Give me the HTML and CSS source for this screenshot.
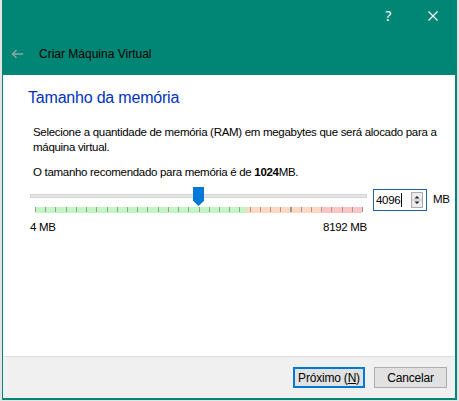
FILE: index.html
```html
<!DOCTYPE html>
<html lang="pt">
<head>
<meta charset="utf-8">
<link rel="stylesheet" href="styles.css">
</head>
<body>
<div class="window">
  <header class="header">
    <div class="titlebar">
      <span class="help">?</span>
      <svg class="close" width="10" height="10" viewBox="0 0 10 10"><path d="M0.5 0.5L9.5 9.5M9.5 0.5L0.5 9.5" stroke="#fff" stroke-width="1.2"/></svg>
    </div>
    <div class="navrow">
      <svg class="back" width="12" height="10" viewBox="0 0 12 10"><path d="M12 5H1.5M5.5 1L1.5 5L5.5 9" stroke="#8fa9a4" stroke-width="1.3" fill="none"/></svg>
      <span class="navtitle">Criar Máquina Virtual</span>
    </div>
  </header>
  <main class="content">
    <h1 class="heading">Tamanho da memória</h1>
    <div class="body">
      <p class="desc">Selecione a quantidade de memória (RAM) em megabytes que será alocado para a máquina virtual.</p>
      <p class="rec">O tamanho recomendado para memória é de <b>1024</b>MB.</p>
    </div>
    <div class="sliderrow">
      <div class="slidercol">
        <div class="track">
          <div class="thumb"></div>
        </div>
        <div class="scale">
          <div class="zone green"></div>
          <div class="zone orange"></div>
          <div class="zone red"></div>
          <div class="ticks"></div>
        </div>
        <div class="limits"><span>4 MB</span><span>8192 MB</span></div>
      </div>
      <div class="spin">
        <span class="spinval">4096<span class="caret"></span></span>
        <span class="spinbtns">
          <svg width="12" height="16" viewBox="0 0 12 16"><rect x="0.5" y="0.5" width="11" height="15" fill="#ececec" stroke="#adadad"/><path d="M3.5 6.5L6 4L8.5 6.5Z" fill="#222"/><path d="M3.5 9.5L6 12L8.5 9.5Z" fill="#222"/><path d="M1 8H11" stroke="#c8c8c8"/></svg>
        </span>
      </div>
      <span class="unit">MB</span>
    </div>
  </main>
  <footer class="footer">
    <button class="btn primary">Próximo (<u>N</u>)</button>
    <button class="btn">Cancelar</button>
  </footer>
</div>
</body>
</html>
```
FILE: styles.css
```css
* { box-sizing: border-box; }
html, body { margin: 0; padding: 0; }
body {
  background: #e4e4e4;
  width: 459px;
  height: 401px;
  overflow: hidden;
  font-family: "Liberation Sans", Arial, sans-serif;
  font-size: 11.5px;
  letter-spacing: -0.3px;
  color: #000;
}
.window {
  margin-left: 2px;
  width: 455px;
  height: 400px;
  border: 1px solid #018574;
  border-right-width: 2px;
  border-top: 0;
  border-bottom-width: 2px;
  display: flex;
  flex-direction: column;
  background: #fff;
}
.header {
  background: #018574;
  height: 75px;
  display: flex;
  flex-direction: column;
}
.titlebar {
  height: 31px;
  display: flex;
  align-items: center;
  justify-content: flex-end;
  padding-right: 17px;
  gap: 37px;
  color: #fff;
}
.help { font-size: 14px; line-height: 14px; font-family: "Noto Sans", sans-serif; }
.navrow {
  display: flex;
  align-items: center;
  height: 44px;
  padding-left: 8px;
  padding-top: 2px;
}
.back { margin-right: 16px; }
.navtitle { font-size: 12px; letter-spacing: 0; color: #000; }
.content {
  flex: 1;
  padding: 13px 0 0 25px;
}
.heading {
  margin: 0;
  font-weight: normal;
  font-size: 16px;
  letter-spacing: -0.2px;
  line-height: 20px;
  color: #0033bb;
}
.body { padding-left: 5px; padding-top: 17px; }
.desc { margin: 0; line-height: 15px; width: 410px; }
.rec { margin: 10px 0 0; line-height: 15px; }
.rec b { font-weight: bold; }
.sliderrow {
  display: flex;
  align-items: flex-start;
  margin-top: 7px;
  padding-left: 2px;
}
.slidercol { width: 337px; }
.track {
  position: relative;
  margin-top: 7px;
  height: 4px;
  background: #e6e6e6;
  border: 1px solid #d4d4d4;
}
.thumb {
  position: absolute;
  left: 162px;
  top: -8px;
  width: 11px;
  height: 19px;
  background: #0078d7;
  clip-path: polygon(0 0, 100% 0, 100% 72%, 50% 100%, 0 72%);
}
.scale {
  position: relative;
  margin: 9px 0 0 5px;
  width: 327px;
  height: 6px;
  display: flex;
}
.zone { height: 6px; }
.green { width: 211px; background: #c4f5c4; }
.orange { width: 75px; background: #fed8c2; }
.red { flex: 1; background: #ffc4c4; }
.ticks {
  position: absolute;
  left: 0; top: 0;
  width: 328px;
  height: 5px;
  background: repeating-linear-gradient(to right, #999 0 1px, transparent 1px 10.22px);
}
.limits {
  display: flex;
  justify-content: space-between;
  margin-top: 7px;
  line-height: 15px;
}
.spin {
  margin-left: 6px;
  margin-top: 2px;
  width: 54px;
  height: 22px;
  border: 1px solid #1f62a8;
  display: flex;
  align-items: center;
  justify-content: space-between;
  padding: 0 3px 0 2px;
}
.spinval { display: flex; align-items: center; }
.caret { width: 1px; height: 14px; background: #000; margin-left: 1px; }
.spinbtns { display: flex; }
.unit { margin-left: 6px; margin-top: 6px; }
.footer {
  height: 42px;
  background: #f0f0f0;
  border-top: 1px solid #dfdfdf;
  display: flex;
  justify-content: flex-end;
  align-items: center;
  padding-right: 8px;
  gap: 9px;
}
.btn {
  font-family: inherit;
  font-size: 12px;
  letter-spacing: -0.2px;
  height: 21px;
  width: 73px;
  background: #e1e1e1;
  border: 1px solid #adadad;
  padding: 0;
  color: #000;
}
.btn.primary { border: 2px solid #0078d7; width: 72px; }
.btn u { text-decoration: underline; }
```
